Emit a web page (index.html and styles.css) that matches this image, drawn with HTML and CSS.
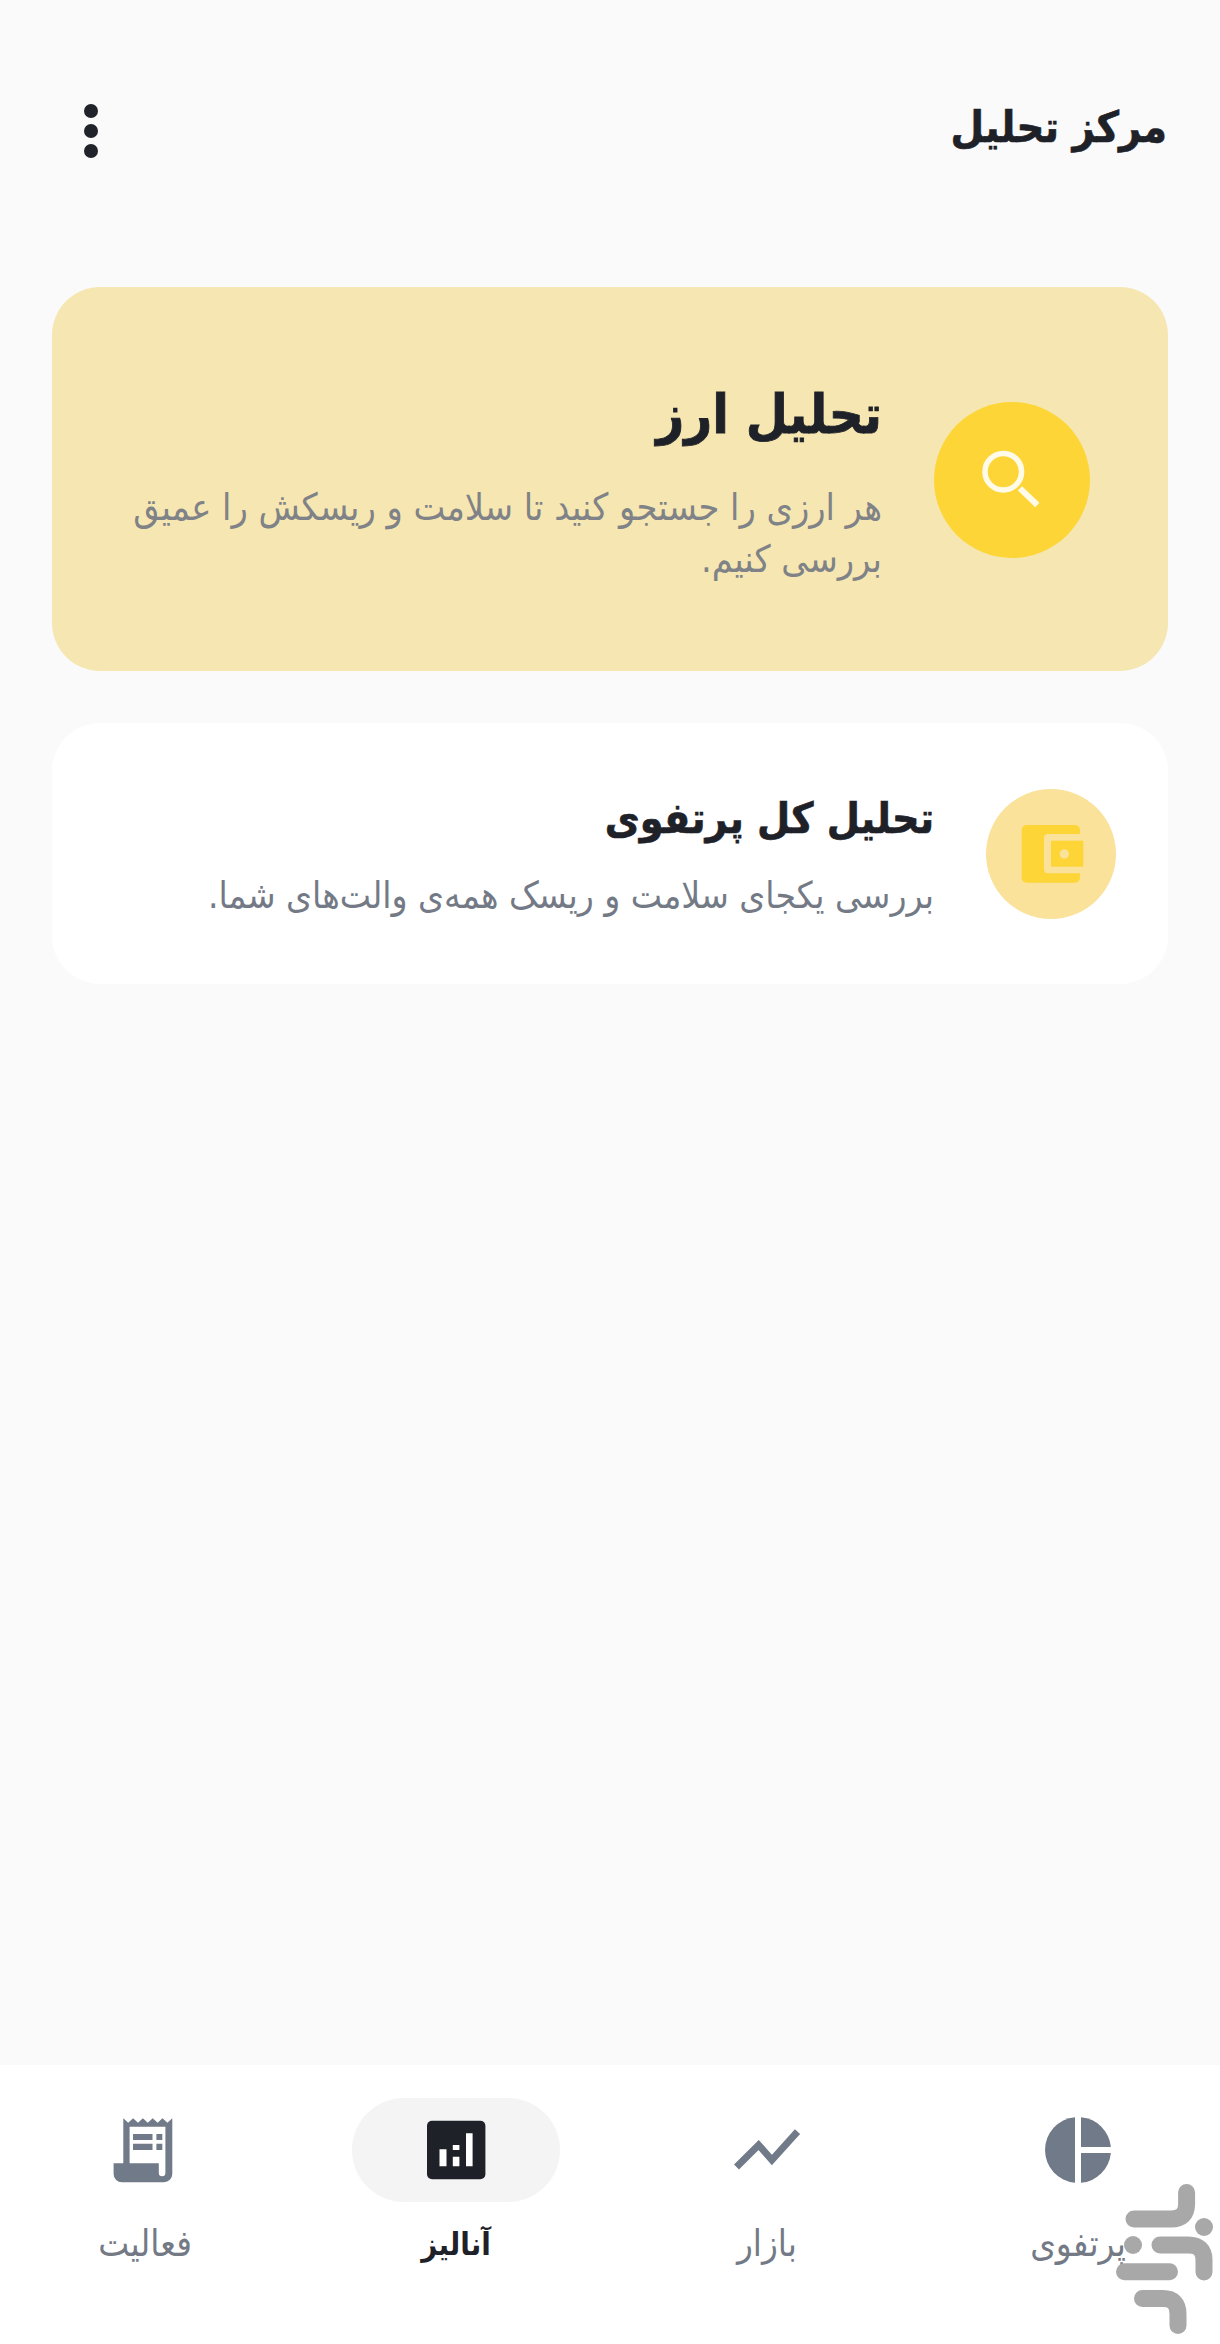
FILE: index.html
```html
<!DOCTYPE html>
<html lang="fa" dir="rtl">
<head>
<meta charset="utf-8">
<title>مرکز تحلیل</title>
<link rel="stylesheet" href="styles.css">
</head>
<body>
<div class="page">
  <header class="header">
    <h1 class="title">مرکز تحلیل</h1>
    <div class="menu"><span class="dot"></span><span class="dot"></span><span class="dot"></span></div>
  </header>
  <main class="content">
    <section class="card card-hero">
      <div class="circle circle-hero">
        <svg class="icon" viewBox="0 0 80 80"><circle cx="31.3" cy="31.7" r="18.3" fill="none" stroke="#fffbe8" stroke-width="5.5"/><path d="M48 48.3L65.3 65" stroke="#fffbe8" stroke-width="6" fill="none"/></svg>
      </div>
      <div class="card-text">
        <h2 class="hero-title">تحلیل ارز</h2>
        <p class="hero-sub">هر ارزی را جستجو کنید تا سلامت و ریسکش را عمیق بررسی کنیم.</p>
      </div>
    </section>
    <section class="card card-plain">
      <div class="circle circle-plain">
        <svg class="icon" viewBox="0 0 80 80"><rect x="10.7" y="11" width="58.3" height="57.7" rx="5" fill="#fdd537"/><path d="M37 20H80V59.3H37a4 4 0 0 1-4-4V24a4 4 0 0 1 4-4z" fill="#fae29b"/><rect x="40" y="26.7" width="32.3" height="26" fill="#fdd537"/><circle cx="53.3" cy="40" r="4.7" fill="#fae29b"/></svg>
      </div>
      <div class="card-text">
        <h2 class="plain-title">تحلیل کل پرتفوی</h2>
        <p class="plain-sub">بررسی یکجای سلامت و ریسک همه‌ی والت‌های شما.</p>
      </div>
    </section>
  </main>
  <nav class="nav">
    <div class="nav-item">
      <div class="pill"><svg class="icon" viewBox="0 0 80 80" fill="#717a88"><path d="M37 7.14A33 33 0 0 0 37 72.86Z"/><path d="M43 7.14A33 33 0 0 1 72.86 37H43Z"/><path d="M43 43H72.86A33 33 0 0 1 43 72.86Z"/></svg></div>
      <span class="nav-label">پرتفوی</span>
    </div>
    <div class="nav-item">
      <div class="pill"><svg class="icon" viewBox="0 0 80 80"><path d="M9.5 57L31.6 35L44.9 50L70.5 21.7" fill="none" stroke="#717a88" stroke-width="7"/></svg></div>
      <span class="nav-label">بازار</span>
    </div>
    <div class="nav-item">
      <div class="pill pill-active"><svg class="icon" viewBox="0 0 80 80"><rect x="11" y="10.7" width="58.4" height="58.6" rx="5" fill="#1e2127"/><path d="M23.5 39.3h7v17h-7zM36.8 46.7h6.6v9.6h-6.6zM36.8 35h6.6v5h-6.6zM50 23.3h6.6v33H50z" fill="#fff"/></svg></div>
      <span class="nav-label nav-label-active">آنالیز</span>
    </div>
    <div class="nav-item">
      <div class="pill"><svg class="icon" viewBox="0 0 80 80"><path d="M18.3 8.3l4.9 4.4 4.9-4.4 4.9 4.4 4.9-4.4 4.9 4.4 4.9-4.4 4.9 4.4 4.9-4.4 4.9 4.4 4.9-4.4V64a8.3 8.3 0 0 1-8.3 8.3H17A8.4 8.4 0 0 1 8.6 64V53.3h9.7z" fill="#717a88"/><path d="M24.6 16.7H60.4V63a3.3 3.3 0 0 1-6.6 0V53.3H24.6z" fill="#fff"/><path d="M28 24h19.5v6H28zM28 33.7h19.5v6.3H28zM51.4 24h5.9v6h-5.9zM51.4 33.7h5.9v6.3h-5.9z" fill="#717a88"/></svg></div>
      <span class="nav-label">فعالیت</span>
    </div>
  </nav>
  <svg class="watermark" viewBox="0 0 97 150" fill="none" stroke="#a8a8a8" stroke-width="17" stroke-linecap="round" stroke-linejoin="round">
    <path d="M70.6 8.5V20Q70.6 35 55 35H18"/>
    <path d="M44 61H72Q88 61 88 76V88"/>
    <path d="M8.5 87.7H53.5"/>
    <path d="M26.5 114.5H47Q62 114.5 62 130V141.5"/>
    <circle cx="88" cy="43" r="9" fill="#a8a8a8" stroke="none"/>
    <circle cx="17" cy="61" r="9" fill="#a8a8a8" stroke="none"/>
  </svg>
</div>
</body>
</html>
```

FILE: styles.css
```css
* { box-sizing: border-box; }
html, body { margin: 0; padding: 0; }
body { background: #fafafa; font-family: "DejaVu Sans Condensed", "DejaVu Sans", sans-serif; font-stretch: condensed; color: #1e2127; }
h1, h2, p { margin: 0; font-weight: inherit; }
.page { position: relative; display: flex; flex-direction: column; height: 2344px; overflow: hidden; }
.header { display: flex; align-items: center; justify-content: space-between; height: 287px; padding: 0 53px 25px 84px; }
.title { font-size: 43px; font-weight: 700; line-height: 60px; margin-bottom: 8px; -webkit-text-stroke: 0.6px #1e2127; }
.menu { display: flex; flex-direction: column; gap: 6px; }
.dot { display: block; width: 14px; height: 14px; border-radius: 50%; background: #20232a; }
.content { flex: 1; display: flex; flex-direction: column; gap: 52px; padding: 0 52px; }
.card { display: flex; align-items: center; }
.card-hero { height: 384px; padding: 2px 78px 0; gap: 52px; background: #f6e6b2; border-radius: 48px; }
.card-plain { height: 261px; padding: 0 52px; gap: 52px; background: #fff; border-radius: 48px; }
.circle { flex: none; display: flex; align-items: center; justify-content: center; border-radius: 50%; }
.circle-hero { width: 156px; height: 156px; background: #fdd537; }
.circle-plain { width: 130px; height: 130px; background: #fae29b; }
.icon { display: block; width: 80px; height: 80px; }
.card-text { flex: 1; min-width: 0; }
.hero-title { font-size: 54px; font-weight: 700; line-height: 78px; margin-bottom: 27px; -webkit-text-stroke: 0.8px #1e2127; }
.hero-sub { font-size: 37.5px; line-height: 52px; color: #7f8286; }
.plain-title { font-size: 42.5px; font-weight: 700; line-height: 62px; margin-bottom: 22px; -webkit-text-stroke: 0.6px #1e2127; }
.plain-sub { font-size: 36.9px; line-height: 48px; color: #737a86; }
.nav { display: flex; justify-content: space-between; height: 279px; padding: 33px 38px 0 41px; background: #fff; }
.nav-item { width: 208px; display: flex; flex-direction: column; align-items: center; gap: 18px; }
.pill { width: 208px; height: 104px; display: flex; align-items: center; justify-content: center; border-radius: 52px; }
.pill-active { background: #f4f4f4; }
.nav-label { font-size: 36.5px; line-height: 48px; color: #737a86; }
.nav-label-active { font-size: 31px; font-weight: 700; color: #1e2127; }
.watermark { position: absolute; left: 1116px; top: 2184px; width: 97px; height: 150px; }
```
